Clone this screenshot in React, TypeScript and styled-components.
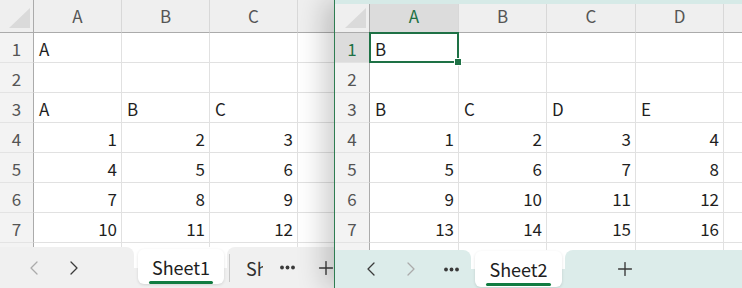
import { Fragment } from "react";
import styled, { createGlobalStyle, css } from "styled-components";
import { ChevronLeft, ChevronRight, Plus } from "lucide-react";

const GREEN = "#1e7145";

const GlobalStyle = createGlobalStyle`
  html, body {
    margin: 0;
    padding: 0;
    background: #ffffff;
  }
  body {
    font-family: "Noto Sans CJK JP", "Noto Sans", sans-serif;
  }
  * {
    box-sizing: border-box;
  }
`;

const Desktop = styled.div`
  display: flex;
  width: 742px;
  height: 288px;
  overflow: hidden;
`;

const Window = styled.div<{ $w: number; $front?: boolean }>`
  position: relative;
  flex: 0 0 ${({ $w }) => $w}px;
  height: 288px;
  display: flex;
  flex-direction: column;
  overflow: hidden;
  background: #ffffff;
  ${({ $front }) =>
    $front &&
    css`
      z-index: 1;
      border-left: 1px solid #2f7d52;
      box-shadow: -10px 0 26px rgba(0, 0, 0, 0.2);
    `}
`;

const TopStrip = styled.div`
  flex: 0 0 4px;
  background: #d6eae7;
`;

const Grid = styled.div<{ $cols: string; $head: number }>`
  flex: 1;
  min-height: 0;
  display: grid;
  grid-template-columns: ${({ $cols }) => $cols};
  grid-template-rows: ${({ $head }) => $head}px;
  grid-auto-rows: 30px;
  align-content: start;
  overflow: hidden;
`;

const Corner = styled.div`
  display: flex;
  align-items: flex-end;
  justify-content: flex-end;
  padding: 0 3px 4px 0;
  background: #efefef;
  border-right: 1px solid #ababab;
  border-bottom: 1px solid #ababab;
`;

const ColHeader = styled.div<{ $sel?: boolean }>`
  display: flex;
  align-items: flex-end;
  justify-content: center;
  padding-bottom: 4px;
  font-size: 17px;
  color: ${({ $sel }) => ($sel ? GREEN : "#555555")};
  background: ${({ $sel }) => ($sel ? "#dcdcdc" : "#efefef")};
  border-right: 1px solid #d8d8d8;
  border-bottom: 1px solid #ababab;
  white-space: nowrap;
`;

const RowHeader = styled.div<{ $sel?: boolean }>`
  display: flex;
  align-items: center;
  justify-content: center;
  padding-top: 2px;
  font-size: 17px;
  color: ${({ $sel }) => ($sel ? GREEN : "#555555")};
  background: ${({ $sel }) => ($sel ? "#dcdcdc" : "#f3f3f3")};
  border-right: 1px solid #ababab;
  border-bottom: 1px solid #e3e3e3;
`;

const Cell = styled.div<{ $num?: boolean; $sel?: boolean }>`
  position: relative;
  display: flex;
  align-items: center;
  justify-content: ${({ $num }) => ($num ? "flex-end" : "flex-start")};
  padding: 2px 4px 0 5px;
  font-size: 17px;
  color: #1f1f1f;
  border-right: 1px solid #e1e1e1;
  border-bottom: 1px solid #e1e1e1;
  white-space: nowrap;
  ${({ $sel }) =>
    $sel &&
    css`
      &::after {
        content: "";
        position: absolute;
        top: -1px;
        left: -1px;
        right: -1px;
        bottom: -1px;
        border: 2px solid ${GREEN};
      }
      &::before {
        content: "";
        position: absolute;
        right: -4px;
        bottom: -4px;
        width: 6px;
        height: 6px;
        background: ${GREEN};
        border: 1px solid #ffffff;
        z-index: 1;
      }
    `}
`;

const Bar = styled.div<{ $panel: string; $h: number }>`
  flex: 0 0 ${({ $h }) => $h}px;
  display: flex;
  align-items: stretch;
  background: linear-gradient(to bottom, #ffffff 0 50%, ${({ $panel }) => $panel} 50%);
`;

const NavPanel = styled.div<{ $panel: string; $w: number; $pad: number }>`
  flex: 0 0 ${({ $w }) => $w}px;
  display: flex;
  align-items: center;
  padding-left: ${({ $pad }) => $pad}px;
  background: ${({ $panel }) => $panel};
  border-top-right-radius: 8px;
`;

const RestPanel = styled.div<{ $panel: string; $lead?: number }>`
  flex: 1;
  display: flex;
  align-items: center;
  margin-left: 3px;
  padding-left: ${({ $lead }) => $lead ?? 0}px;
  background: ${({ $panel }) => $panel};
  border-top-left-radius: 8px;
  overflow: hidden;
`;

const IconButton = styled.div<{ $off?: boolean; $w?: number }>`
  flex: 0 0 ${({ $w }) => $w ?? 40}px;
  height: 100%;
  display: flex;
  align-items: center;
  justify-content: center;
  color: ${({ $off }) => ($off ? "#ababab" : "#3a3a3a")};
`;

const ActiveTab = styled.div<{ $w: number; $top: number; $bottom: number }>`
  flex: 0 0 ${({ $w }) => $w}px;
  margin: ${({ $top, $bottom }) => `${$top}px 0 ${$bottom}px 4px`};
  display: flex;
  flex-direction: column;
  align-items: center;
  justify-content: center;
  background: #ffffff;
  border-radius: 6px;
  box-shadow: 0 1px 3px rgba(0, 0, 0, 0.12);
`;

const TabLabel = styled.span`
  position: relative;
  padding: 0 3px;
  font-size: 18px;
  line-height: 22px;
  color: #202020;
  &::after {
    content: "";
    position: absolute;
    left: 0;
    right: 0;
    bottom: -6px;
    height: 3px;
    border-radius: 2px;
    background: #107c41;
  }
`;

const Separator = styled.div`
  flex: 0 0 1px;
  height: 28px;
  margin: 0 16px 0 2px;
  background: #c8c8c8;
`;

const TruncTab = styled.div`
  flex: 0 0 17px;
  overflow: hidden;
  font-size: 18px;
  color: #303030;
  white-space: nowrap;
`;

const Dots = () => (
  <svg width="15" height="5" viewBox="0 0 15 5">
    <circle cx="2" cy="2.5" r="1.9" fill="currentColor" />
    <circle cx="7.5" cy="2.5" r="1.9" fill="currentColor" />
    <circle cx="13" cy="2.5" r="1.9" fill="currentColor" />
  </svg>
);

const CornerTriangle = () => (
  <svg width="21" height="20" viewBox="0 0 21 20">
    <polygon points="21,0 21,20 0,20" fill="#dadada" />
  </svg>
);

type SheetProps = {
  columns: string[];
  widths: number[];
  rowHead: number;
  head: number;
  rows: (string | number)[][];
  visibleRows: number;
  selCol?: number;
  selRow?: number;
};

const SheetGrid = ({ columns, widths, rowHead, head, rows, visibleRows, selCol, selRow }: SheetProps) => (
  <Grid $cols={[rowHead, ...widths].map((w) => `${w}px`).join(" ")} $head={head}>
    <Corner>
      <CornerTriangle />
    </Corner>
    {columns.map((c, i) => (
      <ColHeader key={`c${i}`} $sel={selCol === i}>
        {c}
      </ColHeader>
    ))}
    {rows.map((row, r) => (
      <Fragment key={`r${r}`}>
        <RowHeader $sel={selRow === r}>{r < visibleRows ? r + 1 : ""}</RowHeader>
        {columns.map((_, c) => {
          const v = row[c];
          return (
            <Cell key={`${r}-${c}`} $num={typeof v === "number"} $sel={selRow === r && selCol === c}>
              {v ?? ""}
            </Cell>
          );
        })}
      </Fragment>
    ))}
  </Grid>
);

const leftRows: (string | number)[][] = [
  ["A"],
  [],
  ["A", "B", "C"],
  [1, 2, 3],
  [4, 5, 6],
  [7, 8, 9],
  [10, 11, 12],
  [],
];

const rightRows: (string | number)[][] = [
  ["B"],
  [],
  ["B", "C", "D", "E"],
  [1, 2, 3, 4],
  [5, 6, 7, 8],
  [9, 10, 11, 12],
  [13, 14, 15, 16],
  [],
];

const GRAY = "#f0f0f0";
const TEAL = "#dcecea";

const App = () => {
  return (
    <>
      <GlobalStyle />
      <Desktop>
        <Window $w={334}>
          <SheetGrid
            columns={["A", "B", "C", ""]}
            widths={[88, 88, 88, 88]}
            rowHead={34}
            head={33}
            rows={leftRows}
            visibleRows={7}
          />
          <Bar $panel={GRAY} $h={41}>
            <NavPanel $panel={GRAY} $w={134} $pad={14}>
              <IconButton $off>
                <ChevronLeft size={24} strokeWidth={1.3} />
              </IconButton>
              <IconButton>
                <ChevronRight size={24} strokeWidth={1.3} />
              </IconButton>
            </NavPanel>
            <ActiveTab $w={86} $top={2} $bottom={4}>
              <TabLabel>Sheet1</TabLabel>
            </ActiveTab>
            <RestPanel $panel={GRAY}>
              <Separator />
              <TruncTab>Sheet2</TruncTab>
              <IconButton $w={48}>
                <Dots />
              </IconButton>
              <IconButton $w={30}>
                <Plus size={22} strokeWidth={1.5} />
              </IconButton>
            </RestPanel>
          </Bar>
        </Window>
        <Window $w={408} $front>
          <TopStrip />
          <SheetGrid
            columns={["A", "B", "C", "D", ""]}
            widths={[89, 88, 89, 88, 88]}
            rowHead={35}
            head={29}
            rows={rightRows}
            visibleRows={7}
            selCol={0}
            selRow={0}
          />
          <Bar $panel={TEAL} $h={38}>
            <NavPanel $panel={TEAL} $w={136} $pad={16}>
              <IconButton>
                <ChevronLeft size={24} strokeWidth={1.3} />
              </IconButton>
              <IconButton $off>
                <ChevronRight size={24} strokeWidth={1.3} />
              </IconButton>
              <IconButton>
                <Dots />
              </IconButton>
            </NavPanel>
            <ActiveTab $w={87} $top={1} $bottom={1}>
              <TabLabel>Sheet2</TabLabel>
            </ActiveTab>
            <RestPanel $panel={TEAL} $lead={40}>
              <IconButton $w={40}>
                <Plus size={22} strokeWidth={1.5} />
              </IconButton>
            </RestPanel>
          </Bar>
        </Window>
      </Desktop>
    </>
  );
};

export default App;
